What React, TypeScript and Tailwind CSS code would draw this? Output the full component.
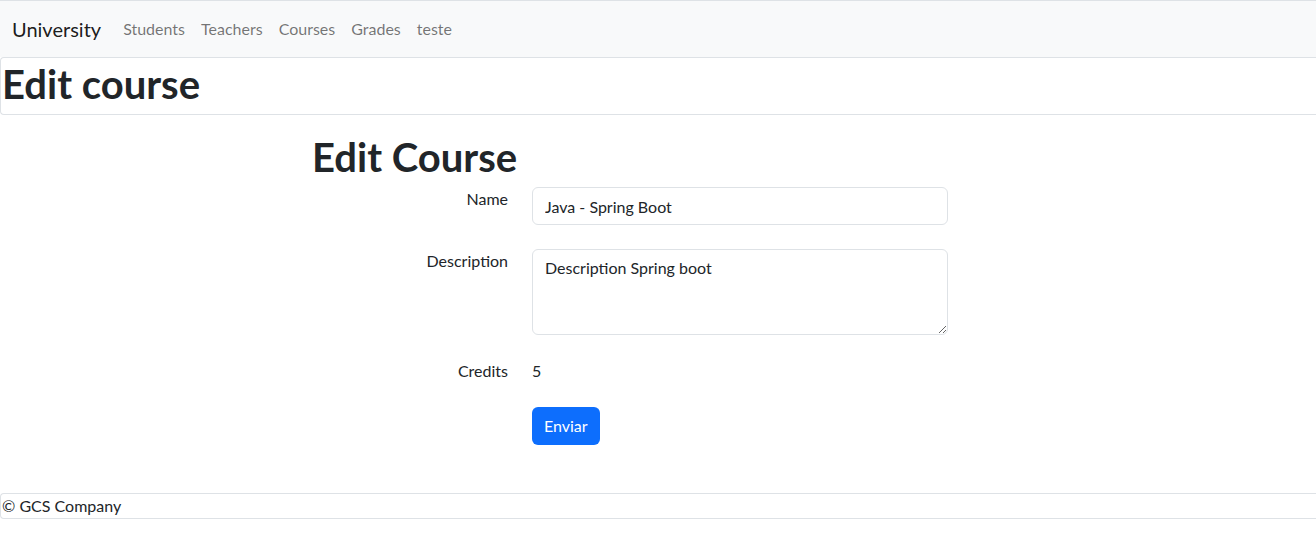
export default function App() {
  const links = ['Students', 'Teachers', 'Courses', 'Grades', 'teste']

  return (
    <div className="min-h-screen bg-white text-[#212529] font-['Segoe_UI',Lato,'Noto_Sans',sans-serif] text-base leading-6">
      <nav className="h-[57px] bg-[#f8f9fa] border-t border-[#dee2e6] flex items-center px-3">
        <a className="text-[20px] leading-[30px] text-black/90 mr-[14px]">University</a>
        <ul className="flex">
          {links.map((l) => (
            <li key={l}>
              <a className="block px-2 py-2 text-black/55">{l}</a>
            </li>
          ))}
        </ul>
      </nav>

      <div className="border-y border-l border-[#dee2e6] rounded-l">
        <h1 className="text-[40px] leading-[48px] font-bold mt-0.5 mb-1.5 pl-px">Edit course</h1>
      </div>

      <div className="mt-[18px] pl-[312px] flex flex-col">
        <h1 className="text-[40px] leading-[48px] font-bold mb-1.5">Edit Course</h1>

        <form className="flex flex-col gap-6" onSubmit={(e) => e.preventDefault()}>
          <div className="flex gap-6">
            <label className="w-[196px] text-right">Name</label>
            <input
              className="w-[416px] h-[38px] border border-[#dee2e6] rounded-md px-3 py-1.5 outline-none"
              defaultValue="Java - Spring Boot"
            />
          </div>

          <div className="flex gap-6">
            <label className="w-[196px] text-right">Description</label>
            <textarea
              className="w-[416px] h-[86px] border border-[#dee2e6] rounded-md px-3 py-1.5 outline-none"
              defaultValue="Description Spring boot"
            />
          </div>

          <div className="flex gap-6">
            <span className="w-[196px] text-right">Credits</span>
            <span>5</span>
          </div>

          <div className="flex gap-6">
            <span className="w-[196px]" />
            <button
              type="submit"
              className="h-[38px] px-3 rounded-md bg-[#0d6efd] text-white"
            >
              Enviar
            </button>
          </div>
        </form>
      </div>

      <footer className="mt-12 border-y border-l border-[#dee2e6] rounded-l pl-px">
        © GCS Company
      </footer>
    </div>
  )
}
